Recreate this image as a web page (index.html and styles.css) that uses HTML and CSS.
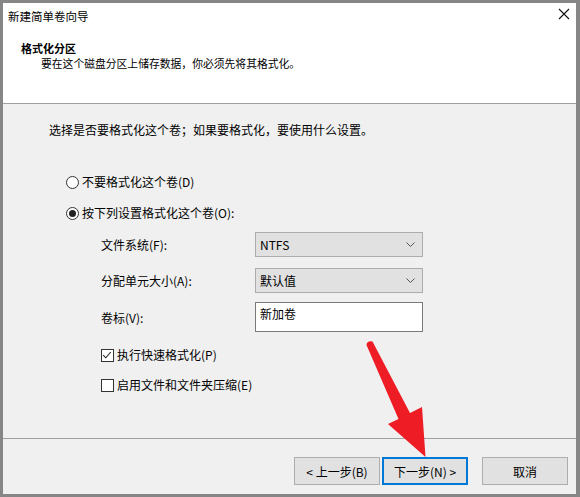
FILE: index.html
```html
<!DOCTYPE html>
<html lang="zh-CN">
<head>
  <meta charset="UTF-8" />
  <title>新建简单卷向导</title>
  <link rel="stylesheet" href="styles.css">
</head>
<body>
  <div class="window">
    <div class="titlebar">
      <span class="title">新建简单卷向导</span>
      <svg class="close" width="12" height="12" viewBox="0 0 12 12"><path d="M1 1L11 11M11 1L1 11" stroke="#111" stroke-width="1.1"/></svg>
    </div>

    <div class="header">
      <div class="head-title">格式化分区</div>
      <div class="head-sub">要在这个磁盘分区上储存数据，你必须先将其格式化。</div>
    </div>

    <div class="content">
      <p class="intro">选择是否要格式化这个卷；如果要格式化，要使用什么设置。</p>

      <div class="options">
        <div class="opt"><span class="radio"></span>不要格式化这个卷(D)</div>
        <div class="opt opt-second"><span class="radio on"></span>按下列设置格式化这个卷(O):</div>

        <div class="fields">
          <label class="fld-label">文件系统(F):</label>
          <div class="combo">NTFS<svg class="chev" width="9" height="5" viewBox="0 0 9 5"><path d="M0.5 0.5L4.5 4.5L8.5 0.5" fill="none" stroke="#555"/></svg></div>

          <label class="fld-label">分配单元大小(A):</label>
          <div class="combo">默认值<svg class="chev" width="9" height="5" viewBox="0 0 9 5"><path d="M0.5 0.5L4.5 4.5L8.5 0.5" fill="none" stroke="#555"/></svg></div>

          <label class="fld-label">卷标(V):</label>
          <div class="textbox">新加卷</div>
        </div>

        <div class="checks">
          <div class="chk"><span class="box"><svg width="12" height="12" viewBox="0 0 12 12"><path d="M2.2 6.2L4.8 8.8L9.8 3" fill="none" stroke="#222" stroke-width="1.1"/></svg></span>执行快速格式化(P)</div>
          <div class="chk"><span class="box"></span>启用文件和文件夹压缩(E)</div>
        </div>
      </div>
    </div>

    <div class="footer">
      <button class="btn">&lt; 上一步(B)</button>
      <button class="btn btn-default">下一步(N) &gt;</button>
      <button class="btn btn-cancel">取消</button>
    </div>

    <!-- pointer drawn over the dialog -->
    <svg class="arrow" width="80" height="130" viewBox="360 335 80 130">
      <path d="M366.5 345 Q367 340.5 372.5 341.5 L410 413 L422 407 L425.5 457 L388 424 L398.5 419 Z" fill="#ee1c25"/>
    </svg>
  </div>
</body>
</html>
```

FILE: styles.css
```css
* {box-sizing: border-box;}
html, body {margin: 0; padding: 0;}
body {background: #868686; font-family: "Noto Sans CJK SC", "Noto Sans", sans-serif; font-size: 12px; color: #000; width: 580px; height: 497px;}

.window {position: relative; margin: 3px 4px 0 3px; height: 491px; background: #f0f0f0; display: flex; flex-direction: column;}

.titlebar {height: 24px; background: #fff; display: flex; align-items: center; justify-content: space-between; padding: 0 6px 0 5px;}
.title {font-size: 11.5px; line-height: 16px; margin-top: 1px;}
.close {display: block; margin-top: -2px;}

.header {background: #fff; height: 77px; border-bottom: 1px solid #a0a0a0; padding: 13px 0 0 18px;}
.head-title {font-weight: bold; line-height: 16px; font-size: 11px;}
.head-sub {line-height: 16px; margin-top: -1px; padding-left: 20px; font-size: 10.8px;}

.content {flex: 1; padding: 18px 0 0 46px;}
.intro {margin: 0; line-height: 16px;}

.options {margin: 36px 0 0 17px;}
.opt {display: flex; align-items: center; line-height: 16px;}
.opt-second {margin-top: 15px;}
.radio {width: 13px; height: 13px; border: 1px solid #333; border-radius: 50%; margin-right: 3px; display: flex; align-items: center; justify-content: center; background: #fff;}
.radio.on::after {content: ""; width: 7px; height: 7px; border-radius: 50%; background: #222;}

.fields {display: grid; grid-template-columns: 154px 168px; row-gap: 11px; margin: 11px 0 0 35px; align-items: center;}
.fields .textbox {margin-top: -2px;}
.fld-label {line-height: 16px;}
.combo {height: 25px; background: #e1e1e1; border: 1px solid #adadad; display: flex; align-items: center; justify-content: space-between; padding: 0 7px 0 4px;}
.chev {display: block;}
.textbox {height: 30px; background: #fff; border: 1px solid #7a7a7a; padding: 3px 4px; line-height: 16px;}

.checks {margin: 15px 0 0 35px;}
.chk {display: flex; align-items: center; line-height: 16px;}
.chk + .chk {margin-top: 14px;}
.box {width: 13px; height: 13px; border: 1px solid #333; background: #fff; margin-right: 3px; display: flex;}
.box svg {margin: -1px 0 0 -1px;}

.footer {height: 56px; border-top: 1px solid #a0a0a0; display: flex; justify-content: flex-end; align-items: flex-start; padding: 18px 8px 0 0;}
.btn {font-family: inherit; font-size: 12px; color: #000; height: 28px; width: 86px; background: #e1e1e1; border: 1px solid #adadad; padding: 0; margin: 0;}
.btn-default {margin-left: 2px; border: 2px solid #0078d7;}
.btn-cancel {margin-left: 14px;}

.arrow {position: absolute; left: 357px; top: 332px;}
```
